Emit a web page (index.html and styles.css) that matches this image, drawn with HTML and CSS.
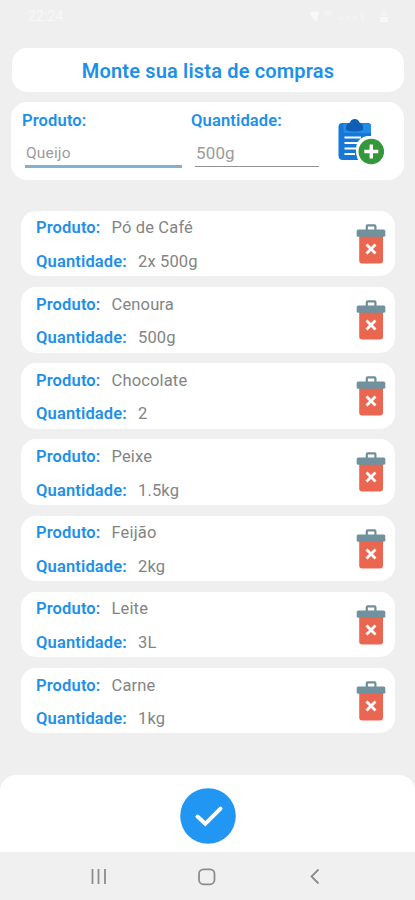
FILE: index.html
```
<!DOCTYPE html>
<html lang="pt-BR">
<head>
<meta charset="UTF-8">
<title>Lista de compras</title>
<link rel="stylesheet" href="styles.css">
</head>
<body>
<svg class="defs" width="0" height="0">
  <symbol id="trash" viewBox="0 0 30 40">
    <path d="M10.8 7V2.2Q10.8 1.3 11.8 1.3H18.4Q19.4 1.3 19.4 2.2V7" fill="none" stroke="#6f8e98" stroke-width="2.2"/>
    <path d="M3.2 12H27V36.5Q27 39.5 24 39.5H6.2Q3.2 39.5 3.2 36.5Z" fill="#eb6650"/>
    <path d="M2.3 5.5H27.7Q29.3 5.5 29.3 7.1V11.2Q29.3 12.8 27.7 12.8H2.3Q.7 12.8 .7 11.2V7.1Q.7 5.5 2.3 5.5Z" fill="#6f929e"/>
    <path d="M10.5 20.5L19.5 29.5M19.5 20.5L10.5 29.5" stroke="#fff" stroke-width="2.8"/>
  </symbol>
</svg>
<header class="status">
  <span>22:24</span>
  <svg width="82" height="16" viewBox="0 0 82 16" fill="#f8f8f8"><path d="M4 5q4-3 9-1l-2 10q-5-3-7-9z"/><path d="M17 4q5-4 10 0l-5 7z" opacity=".4"/><path d="M33 9h4v3h-4zm7-2h4v5h-4zm7 1h4v4h-4zm8-3h3v7h-3z" opacity=".4"/><path d="M74 9h8v5h-8z"/><path d="M75 4h6v4h-6z" opacity=".5"/></svg>
</header>
<h1 class="title">Monte sua lista de compras</h1>
<section class="form">
  <div class="field product"><label>Produto:</label><div class="input active">Queijo</div></div>
  <div class="field quantity"><label>Quantidade:</label><div class="input">500g</div></div>
  <svg class="add" width="48" height="48" viewBox="0 0 48 48">
    <path d="M6 5H32Q35 5 35 8V18H31Q20 20 20 32Q20 37 22 42H7Q2.5 42 2.5 37.5V9Q2.5 5 6 5Z" fill="#1777d8"/>
    <path d="M7 5.5H32Q35 5.5 35 8.5V15H8Z" fill="#238ce7"/>
    <path d="M10 12V9Q10 5.5 14 4.5Q15 1 18.8 1Q22.5 1 23.5 4.5Q27 5.5 27 9V12Q18.5 15 10 12Z" fill="#0d60b5"/>
    <path d="M8.5 19.5H25M8.5 25H22M8.5 30.5H20M8.5 36H19" stroke="#fff" stroke-width="2.1"/>
    <circle cx="35.3" cy="33.5" r="15" fill="#fff"/>
    <circle cx="35.3" cy="33.5" r="12.8" fill="#35973b"/>
    <path d="M35.3 26.5V40.5M28.3 33.5H42.3" stroke="#fff" stroke-width="3.4"/>
  </svg>
</section>
<main class="list">
  <article class="item"><div><p><b>Produto:</b>Pó de Café</p><p><b>Quantidade:</b>2x 500g</p></div><svg class="trash"><use href="#trash"/></svg></article>
  <article class="item"><div><p><b>Produto:</b>Cenoura</p><p><b>Quantidade:</b>500g</p></div><svg class="trash"><use href="#trash"/></svg></article>
  <article class="item"><div><p><b>Produto:</b>Chocolate</p><p><b>Quantidade:</b>2</p></div><svg class="trash"><use href="#trash"/></svg></article>
  <article class="item"><div><p><b>Produto:</b>Peixe</p><p><b>Quantidade:</b>1.5kg</p></div><svg class="trash"><use href="#trash"/></svg></article>
  <article class="item"><div><p><b>Produto:</b>Feijão</p><p><b>Quantidade:</b>2kg</p></div><svg class="trash"><use href="#trash"/></svg></article>
  <article class="item"><div><p><b>Produto:</b>Leite</p><p><b>Quantidade:</b>3L</p></div><svg class="trash"><use href="#trash"/></svg></article>
  <article class="item"><div><p><b>Produto:</b>Carne</p><p><b>Quantidade:</b>1kg</p></div><svg class="trash"><use href="#trash"/></svg></article>
</main>
<footer class="confirm">
  <svg width="56" height="56" viewBox="0 0 56 56"><circle cx="28" cy="28" r="27.8" fill="#2196f3"/><path d="M17.5 28.5L25.3 35.8L40.5 20.7" fill="none" stroke="#fff" stroke-width="4" stroke-linecap="round"/></svg>
</footer>
<nav class="nav">
  <svg width="415" height="48" viewBox="0 0 415 48" fill="none" stroke="#8c8c8c" stroke-width="1.8"><path d="M92.5 17V32M98.5 17V32M105 17V32"/><rect x="199" y="17.3" width="15.5" height="15" rx="4.5"/><path d="M318.5 17.5L311.5 24.5L318.5 31.5"/></svg>
</nav>
</body>
</html>
```
FILE: styles.css
```
* { box-sizing: border-box; }
body {
  margin: 0;
  width: 415px;
  height: 900px;
  overflow: hidden;
  display: flex;
  flex-direction: column;
  background: #efefef;
  font-family: Roboto, sans-serif;
  font-size: 16.5px;
  letter-spacing: .15px;
  color: #848484;
}
h1, p { margin: 0; }
.defs { position: absolute; }
.status {
  height: 48px;
  padding: 8px 27px 0 28px;
  display: flex;
  justify-content: space-between;
  font-size: 14px;
  line-height: 16px;
  color: #f7f7f7;
}
.title {
  height: 44px;
  margin: 0 11px 0 12px;
  border-radius: 15px;
  background: #fff;
  color: #1e90e8;
  font-size: 20px;
  font-weight: 600;
  letter-spacing: .17px;
  line-height: 46px;
  text-align: center;
}
.form {
  height: 78px;
  margin: 10px 11px 0;
  padding: 8px 0 0 11px;
  display: flex;
  border-radius: 16px;
  background: #fff;
}
.field label {
  display: block;
  height: 20px;
  line-height: 21px;
  font-weight: 600;
  color: #1e90e8;
}
.product { width: 169px; }
.quantity { width: 145px; }
.input {
  height: 37px;
  margin-left: 4px;
  padding-top: 13px;
  line-height: 21px;
  border-bottom: 1px solid #929292;
  color: #9b9b9b;
}
.product .input { width: 157px; margin-left: 3px; padding-left: 1px; font-size: 15.5px; }
.quantity .input { width: 124px; padding-left: 1px; font-size: 17px; }
.input.active { height: 38px; border-bottom: 3px solid #82b0ce; }
.add { margin-top: 8px; }
.list {
  margin: 31px 20px 0 21px;
  height: 564px;
  display: flex;
  flex-direction: column;
  gap: 10.7px;
}
.item {
  height: 65.5px;
  padding: .6px 9px 0 15px;
  display: flex;
  justify-content: space-between;
  border-radius: 15px;
  background: #fff;
}
.item p { height: 33.5px; line-height: 33.5px; }
.item b { margin-right: 11px; font-weight: 600; color: #1e90e8; }
.trash { width: 30px; height: 40px; margin-top: 12.4px; }
.confirm {
  height: 77px;
  margin-top: 1px;
  display: flex;
  justify-content: center;
  padding: 13px 0 0;
  border-radius: 16px 16px 0 0;
  background: #fff;
}
.nav { height: 48px; background: #f0f0f0; }
```
